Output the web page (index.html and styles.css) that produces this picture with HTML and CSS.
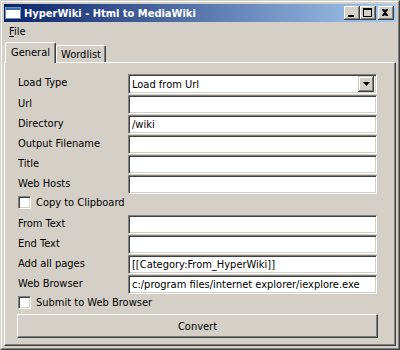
FILE: index.html
```html
<!DOCTYPE html>
<html>
<head>
<meta charset="utf-8">
<title>HyperWiki - Html to MediaWiki</title>
<link rel="stylesheet" href="styles.css">
</head>
<body>
<div class="window">
  <div class="window-inner">
    <div class="titlebar">
      <svg class="appicon" width="16" height="12" viewBox="0 0 16 12">
        <rect x="0.5" y="0.5" width="15" height="11" fill="#ffffff" stroke="#6f8fc0"/>
        <rect x="1" y="1" width="14" height="2" fill="#3a6ea5"/>
      </svg>
      <span class="title">HyperWiki - Html to MediaWiki</span>
      <div class="caption-btns">
        <span class="cbtn"><svg width="16" height="14" viewBox="0 0 16 14"><rect x="4" y="9" width="6" height="2" fill="#000"/></svg></span>
        <span class="cbtn"><svg width="16" height="14" viewBox="0 0 16 14"><rect x="3.5" y="2.5" width="8" height="8" fill="none" stroke="#000"/><rect x="3" y="2" width="9" height="2" fill="#000"/></svg></span>
        <span class="cbtn close"><svg width="16" height="14" viewBox="0 0 16 14"><path d="M4 3h2l1 1 1-1h2v1l-2 2.5 2 2.5v1H8l-1-1-1 1H4V9l2-2.5L4 4z" fill="#000"/></svg></span>
      </div>
    </div>
    <div class="menubar"><span class="menu"><u>F</u>ile</span></div>
    <div class="tabs">
      <div class="tab active">General</div>
      <div class="tab">Wordlist</div>
    </div>
    <div class="panel">
      <div class="form">
        <div class="label">Load Type</div>
        <div class="field combo"><span class="combo-text">Load from Url</span><span class="combo-btn"><svg width="7" height="4" viewBox="0 0 7 4"><path d="M0 0h7L3.5 4z" fill="#000"/></svg></span></div>
        <div class="label">Url</div>
        <div class="field"></div>
        <div class="label">Directory</div>
        <div class="field">/wiki</div>
        <div class="label">Output Filename</div>
        <div class="field"></div>
        <div class="label">Title</div>
        <div class="field"></div>
        <div class="label">Web Hosts</div>
        <div class="field"></div>
        <div class="check-row"><span class="checkbox"></span><span class="check-label">Copy to Clipboard</span></div>
        <div class="label">From Text</div>
        <div class="field"></div>
        <div class="label">End Text</div>
        <div class="field"></div>
        <div class="label">Add all pages</div>
        <div class="field">[[Category:From_HyperWiki]]</div>
        <div class="label">Web Browser</div>
        <div class="field">c:/program files/internet explorer/iexplore.exe</div>
        <div class="check-row"><span class="checkbox"></span><span class="check-label">Submit to Web Browser</span></div>
      </div>
      <div class="convert">Convert</div>
    </div>
  </div>
</div>
</body>
</html>
```

FILE: styles.css
```css
* { box-sizing: border-box; }
html, body { margin: 0; padding: 0; }
body {
  width: 400px;
  height: 350px;
  overflow: hidden;
  background: #d4d0c8;
  font-family: "DejaVu Sans Condensed", "DejaVu Sans", sans-serif;
  font-stretch: condensed;
  font-size: 11px;
  color: #000;
}
.window {
  width: 400px;
  height: 350px;
  background: #d4d0c8;
  border: 1px solid;
  border-color: #d4d0c8 #404040 #404040 #d4d0c8;
  display: flex;
}
.window-inner {
  flex: 1;
  border: 1px solid;
  border-color: #ffffff #808080 #808080 #ffffff;
  padding: 2px;
  display: flex;
  flex-direction: column;
}
.titlebar {
  height: 18px;
  flex: none;
  background: linear-gradient(to right, #0a246a, #a6caf0);
  display: flex;
  align-items: center;
  padding: 0 2px 0 1px;
}
.appicon { flex: none; }
.title {
  margin-left: 3px;
  color: #fff;
  font-weight: bold;
  font-size: 11px;
  white-space: nowrap;
}
.caption-btns {
  margin-left: auto;
  display: flex;
}
.cbtn {
  width: 16px;
  height: 14px;
  background: #d4d0c8;
  box-shadow: inset -1px -1px #404040, inset 1px 1px #ffffff, inset -2px -2px #808080, inset 2px 2px #d4d0c8;
  display: block;
}
.cbtn svg { display: block; }
.cbtn.close { margin-left: 2px; }
.menubar {
  height: 19px;
  flex: none;
  display: flex;
  align-items: center;
  padding-left: 5px;
}
.tabs {
  height: 21px;
  flex: none;
  display: flex;
  align-items: flex-end;
  padding-left: 1px;
}
.tab {
  height: 17px;
  border: 1px solid;
  border-bottom: none;
  border-color: #ffffff #404040 transparent #ffffff;
  border-radius: 2px 2px 0 0;
  box-shadow: inset -1px 0 #808080;
  display: flex;
  align-items: center;
  justify-content: center;
  background: #d4d0c8;
}
.tab.active {
  width: 51px;
  height: 21px;
  margin-bottom: -1px;
  position: relative;
  z-index: 1;
  padding-bottom: 1px;
}
.tab:not(.active) {
  width: 50px;
  padding-top: 1px;
}
.panel {
  flex: 1;
  border: 1px solid;
  border-color: #ffffff #404040 #404040 #ffffff;
  box-shadow: inset -1px -1px #808080;
  padding: 11px 0 0 13px;
  display: flex;
  flex-direction: column;
}
.form {
  display: grid;
  grid-template-columns: 110px 249px;
  grid-auto-rows: 19px;
  grid-template-rows: 20px;
  row-gap: 1px;
}
.label {
  align-self: start;
  line-height: 13px;
  padding-top: 2px;
  white-space: nowrap;
}
.field {
  height: 19px;
  background: #fff;
  border: 1px solid;
  border-color: #808080 #ffffff #ffffff #808080;
  box-shadow: inset 1px 1px #404040, inset -1px -1px #d4d0c8;
  padding: 0 2px 0 3px;
  display: flex;
  align-items: center;
  white-space: nowrap;
  overflow: hidden;
}
.combo {
  height: 20px;
  padding: 2px 2px 2px 2px;
}
.combo-text { flex: 1; padding-left: 1px; }
.combo-btn {
  width: 16px;
  height: 16px;
  background: #d4d0c8;
  box-shadow: inset -1px -1px #404040, inset 1px 1px #d4d0c8, inset -2px -2px #808080, inset 2px 2px #ffffff;
  display: flex;
  align-items: center;
  justify-content: center;
}
.combo-btn svg { display: block; }
.check-row {
  grid-column: 1 / 3;
  display: flex;
  align-items: flex-start;
  padding-top: 1px;
}
.checkbox {
  width: 13px;
  height: 13px;
  background: #fff;
  border: 1px solid;
  border-color: #808080 #ffffff #ffffff #808080;
  box-shadow: inset 1px 1px #404040, inset -1px -1px #d4d0c8;
  flex: none;
}
.check-label {
  margin-left: 5px;
  line-height: 13px;
}
.convert {
  margin-left: -1px;
  width: 361px;
  height: 24px;
  background: #d4d0c8;
  border: 1px solid;
  border-color: #ffffff #404040 #404040 #ffffff;
  box-shadow: inset -1px -1px #808080;
  display: flex;
  align-items: center;
  justify-content: center;
}
```
